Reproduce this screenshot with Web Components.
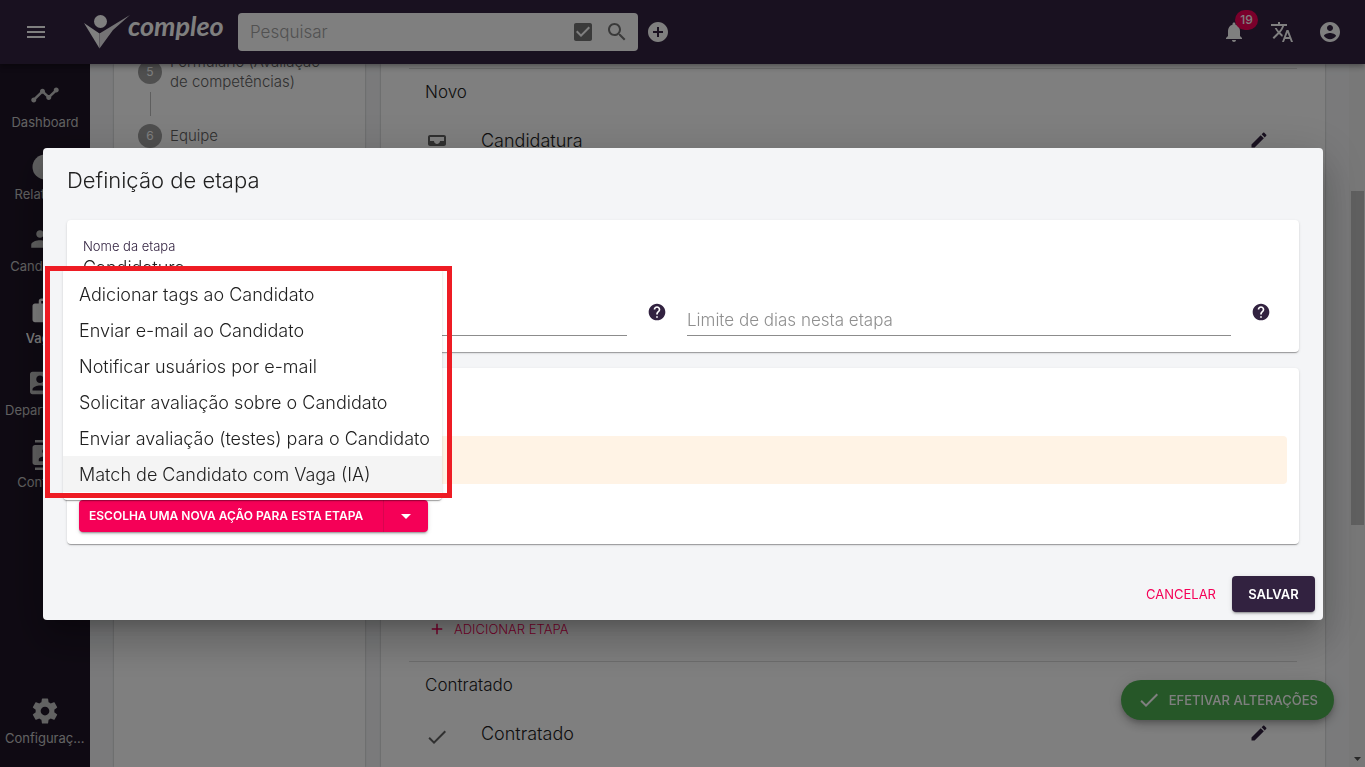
<!DOCTYPE html>
<html lang="pt-BR">
<head>
<meta charset="utf-8">
<title>Compleo - Definição de etapa</title>
<style>
html,body{margin:0;height:100%;overflow:hidden}
body{font-family:Inter,"Open Sans",sans-serif;font-weight:300;font-size:16px;color:#212121;
--brand:#322240;--accent:#f50057;--page:#f4f5f7}
</style>
</head>
<body>
<app-shell>
  <app-header slot="header"></app-header>
  <nav-bar slot="nav">
    <nav-item icon="timeline">Dashboard</nav-item>
    <nav-item icon="pie">Relatórios</nav-item>
    <nav-item icon="people">Candidatos</nav-item>
    <nav-item icon="bag" active>Vagas</nav-item>
    <nav-item icon="contact_mail">Departamentos</nav-item>
    <nav-item icon="contacts">Contatos</nav-item>
    <nav-item icon="settings" slot="end">Configurações</nav-item>
  </nav-bar>
  <step-list></step-list>
  <stage-board>
    <stage-group name="Novo" addable grow>
      <stage-row icon="inbox">Candidatura</stage-row>
    </stage-group>
    <stage-group name="Contratado">
      <stage-row icon="check">Contratado</stage-row>
    </stage-group>
  </stage-board>
  <apply-button slot="float">EFETIVAR ALTERAÇÕES</apply-button>
</app-shell>
<stage-dialog heading="Definição de etapa">
  <paper-card>
    <stage-form></stage-form>
  </paper-card>
  <paper-card>
    <stage-actions>
      <action-menu>
        <menu-option>Adicionar tags ao Candidato</menu-option>
        <menu-option>Enviar e-mail ao Candidato</menu-option>
        <menu-option>Notificar usuários por e-mail</menu-option>
        <menu-option>Solicitar avaliação sobre o Candidato</menu-option>
        <menu-option>Enviar avaliação (testes) para o Candidato</menu-option>
        <menu-option active>Match de Candidato com Vaga (IA)</menu-option>
      </action-menu>
    </stage-actions>
  </paper-card>
</stage-dialog>

<script>
const ICONS = {
  menu:'M3 18h18v-2H3v2zm0-5h18v-2H3v2zm0-7v2h18V6H3z',
  checkbox:'M19 3H5c-1.110 0-2 .9-2 2v14c0 1.100.89 2 2 2h14c1.110 0 2-.9 2-2V5c0-1.100-.89-2-2-2zm-9 14l-5-5 1.410-1.410L10 14.170l7.590-7.590L19 8l-9 9z',
  search:'M15.500 14h-.79l-.28-.27C15.410 12.590 16 11.110 16 9.500 16 5.910 13.090 3 9.500 3S3 5.910 3 9.500 5.910 16 9.500 16c1.610 0 3.090-.59 4.230-1.570l.27.28v.79l5 4.990L20.490 19l-4.990-5zm-6 0C7.010 14 5 11.990 5 9.500S7.010 5 9.500 5 14 7.010 14 9.500 11.990 14 9.500 14z',
  add_circle:'M12 2C6.480 2 2 6.480 2 12s4.480 10 10 10 10-4.480 10-10S17.520 2 12 2zm5 11h-4v4h-2v-4H7v-2h4V7h2v4h4v2z',
  bell:'M12 22c1.100 0 2-.9 2-2h-4c0 1.100.89 2 2 2zm6-6v-5c0-3.070-1.640-5.640-4.500-6.320V4c0-.83-.67-1.500-1.500-1.500s-1.500.67-1.500 1.500v.68C7.630 5.360 6 7.920 6 11v5l-2 2v1h16v-1l-2-2z',
  translate:'M12.870 15.070l-2.540-2.510.03-.03c1.740-1.940 2.980-4.170 3.710-6.530H17V4h-7V2H8v2H1v1.990h11.170C11.500 7.920 10.440 9.750 9 11.350 8.070 10.320 7.300 9.190 6.690 8h-2c.73 1.630 1.730 3.170 2.980 4.560l-5.090 5.020L4 19l5-5 3.110 3.110.76-2.040zM18.500 10h-2L12 22h2l1.120-3h4.750L21 22h2l-4.500-12zm-2.620 7l1.620-4.330L19.120 17h-3.240z',
  account:'M12 2C6.480 2 2 6.480 2 12s4.480 10 10 10 10-4.480 10-10S17.520 2 12 2zm0 3c1.660 0 3 1.340 3 3s-1.340 3-3 3-3-1.340-3-3 1.340-3 3-3zm0 14.200c-2.500 0-4.710-1.280-6-3.220.03-1.990 4-3.080 6-3.080 1.990 0 5.970 1.090 6 3.080-1.290 1.940-3.500 3.220-6 3.220z',
  timeline:'M23 8c0 1.100-.9 2-2 2-.18 0-.35-.02-.51-.07l-3.560 3.550c.05.16.07.34.07.52 0 1.100-.9 2-2 2s-2-.9-2-2c0-.18.02-.36.07-.52l-2.550-2.550c-.16.05-.34.07-.52.07s-.36-.02-.52-.07l-4.550 4.560c.05.16.07.33.07.51 0 1.100-.9 2-2 2s-2-.9-2-2 .9-2 2-2c.18 0 .35.02.51.07l4.560-4.550C8.020 9.360 8 9.180 8 9c0-1.100.9-2 2-2s2 .9 2 2c0 .18-.02.36-.07.52l2.550 2.550c.16-.05.34-.07.52-.07s.36.02.52.07l3.550-3.560C19.020 8.350 19 8.180 19 8c0-1.100.9-2 2-2s2 .9 2 2z',
  pie:'M12 2a10 10 0 1 0 0 20 10 10 0 0 0 0-20z',
  people:'M16 11c1.660 0 2.990-1.340 2.990-3S17.660 5 16 5c-1.660 0-3 1.340-3 3s1.340 3 3 3zm-8 0c1.660 0 2.990-1.340 2.990-3S9.660 5 8 5C6.340 5 5 6.340 5 8s1.340 3 3 3zm0 2c-2.330 0-7 1.170-7 3.500V19h14v-2.500c0-2.330-4.670-3.500-7-3.500zm8 0c-.29 0-.62.02-.97.05 1.160.84 1.970 1.970 1.970 3.450V19h6v-2.500c0-2.330-4.670-3.500-7-3.500z',
  bag:'M20 6h-3V4c0-1.110-.89-2-2-2H9c-1.110 0-2 .89-2 2v2H4c-1.110 0-2 .89-2 2v11c0 1.110.89 2 2 2h16c1.110 0 2-.89 2-2V8c0-1.110-.89-2-2-2zm-5 0H9V4h6v2z',
  contact_mail:'M21 8V7l-3 2-3-2v1l3 2 3-2zm1-5H2C.9 3 0 3.900 0 5v14c0 1.100.9 2 2 2h20c1.100 0 1.990-.9 1.990-2L24 5c0-1.100-.9-2-2-2zM8 6c1.660 0 3 1.340 3 3s-1.340 3-3 3-3-1.340-3-3 1.340-3 3-3zm6 12H2v-1c0-2 4-3.100 6-3.100s6 1.100 6 3.100v1zm8-6h-8V6h8v6z',
  contacts:'M20 0H4v2h16V0zM4 24h16v-2H4v2zM20 4H4c-1.100 0-2 .9-2 2v12c0 1.100.9 2 2 2h16c1.100 0 2-.9 2-2V6c0-1.100-.9-2-2-2zm-8 2.750c1.240 0 2.250 1.010 2.250 2.250s-1.010 2.250-2.250 2.250S9.750 10.240 9.750 9 10.760 6.750 12 6.750zM17 17H7v-1.500c0-1.670 3.330-2.500 5-2.500s5 .83 5 2.500V17z',
  settings:'M19.430 12.980c.04-.32.07-.64.07-.98s-.03-.66-.07-.98l2.110-1.650c.19-.15.24-.42.12-.64l-2-3.460c-.12-.22-.39-.3-.61-.22l-2.490 1c-.52-.4-1.080-.73-1.690-.98l-.38-2.650C14.460 2.180 14.250 2 14 2h-4c-.25 0-.46.18-.49.42l-.38 2.650c-.61.25-1.170.59-1.690.98l-2.490-1c-.23-.09-.49 0-.61.22l-2 3.460c-.13.22-.07.49.12.64l2.110 1.650c-.04.32-.07.65-.07.98s.03.66.07.98l-2.110 1.650c-.19.15-.24.42-.12.64l2 3.460c.12.22.39.3.61.22l2.490-1c.52.4 1.080.73 1.690.98l.38 2.650c.03.24.24.42.49.42h4c.25 0 .46-.18.49-.42l.38-2.650c.61-.25 1.170-.59 1.690-.98l2.490 1c.23.09.49 0 .61-.22l2-3.460c.12-.22.07-.49-.12-.64l-2.110-1.650zM12 15.500c-1.930 0-3.500-1.570-3.500-3.500s1.570-3.500 3.500-3.500 3.500 1.570 3.500 3.500-1.570 3.500-3.500 3.500z',
  inbox:'M19 3H5c-1.100 0-2 .9-2 2v7c0 1.100.9 2 2 2h14c1.100 0 2-.9 2-2V5c0-1.100-.9-2-2-2zm0 6h-4c0 1.620-1.380 3-3 3s-3-1.380-3-3H5V5h14v4zm-4 7h6v3c0 1.100-.9 2-2 2H5c-1.100 0-2-.9-2-2v-3h6c0 1.660 1.340 3 3 3s3-1.340 3-3z',
  check:'M9 16.170L4.830 12l-1.420 1.410L9 19 21 7l-1.410-1.410z',
  edit:'M3 17.250V21h3.750L17.810 9.940l-3.750-3.750L3 17.250zM20.710 7.040c.39-.39.39-1.020 0-1.410l-2.340-2.340c-.39-.39-1.020-.39-1.410 0l-1.830 1.830 3.750 3.750 1.830-1.830z',
  plus:'M19 13h-6v6h-2v-6H5v-2h6V5h2v6h6v2z',
  help:'M12 2C6.480 2 2 6.480 2 12s4.480 10 10 10 10-4.480 10-10S17.520 2 12 2zm1 17h-2v-2h2v2zm2.070-7.750l-.9.92C13.450 12.900 13 13.500 13 15h-2v-.5c0-1.100.45-2.100 1.170-2.830l1.240-1.260c.37-.36.59-.86.59-1.410 0-1.100-.9-2-2-2s-2 .9-2 2H8c0-2.210 1.790-4 4-4s4 1.790 4 4c0 .88-.36 1.680-.93 2.250z',
  caret:'M7 10l5 5 5-5z'
};
const BASE = `:host,*{box-sizing:border-box}button{font:inherit;color:inherit;border:0;background:none;padding:0;margin:0;cursor:pointer}
input{font:inherit;border:0;outline:0;background:none;padding:0;margin:0;min-width:0}`;
function define(name, css, html){
  customElements.define(name, class extends HTMLElement{
    constructor(){
      super();
      const body = typeof html === 'function' ? html(this) : html;
      this.attachShadow({mode:'open'}).innerHTML = `<style>${BASE}${css}</style>${body}`;
    }
  });
}

define('ui-icon', `:host{display:block;flex:none;width:24px;height:24px}svg{display:block;width:100%;height:100%;fill:currentColor}`,
  el => `<svg viewBox="0 0 24 24" aria-hidden="true"><path d="${ICONS[el.getAttribute('name')]}"/></svg>`);

define('app-shell', `:host{display:grid;grid-template-rows:64px minmax(0,1fr);height:100vh;background:var(--page)}
.header{position:relative;z-index:1}
.body{display:flex;min-height:0;overflow:hidden}
main{flex:1;min-width:0;display:flex;gap:16px;padding:0 24px}
.float{position:fixed;right:31px;bottom:47px}`,
`<div class="header"><slot name="header"></slot></div>
<div class="body"><slot name="nav"></slot><main><slot></slot></main><scroll-rail></scroll-rail></div>
<div class="float"><slot name="float"></slot></div>`);

define('scroll-rail', `:host{flex:none;width:16px;background:#f1f1f1;display:grid;grid-template-rows:127fr 334fr 226fr 16px;padding:0 1px 0 2px}
i{grid-row:2;background:#c1c1c1}svg{grid-row:4;width:100%;height:16px}`,
`<i></i><svg viewBox="0 0 13 16" aria-hidden="true"><path d="M3 6h7l-3.500 4z" fill="#505050"/></svg>`);

define('brand-logo', `:host{display:block}
a{display:flex;align-items:center;color:#fff;text-decoration:none}
svg{display:block;width:46px;height:40px;flex:none}
b{font:italic 700 27px/32px Lato,sans-serif;margin:-12px 0 0 -2px}`,
`<a href="#" aria-label="compleo"><svg viewBox="0 0 46 40" fill="#fff"><circle cx="16.500" cy="9.500" r="6.500"/><path d="M0 11l15.500 10.500V36.500z"/><path d="M46 3L15.500 21.500V36.500L29 18z" fill="#e8e6ea"/></svg><b>compleo</b></a>`);

define('app-header', `:host{display:flex;align-items:center;height:64px;padding:0 23px 0 24px;background:var(--brand);color:#fff;
box-shadow:0 2px 4px -1px rgba(0,0,0,.2),0 4px 5px rgba(0,0,0,.14),0 1px 10px rgba(0,0,0,.12)}
brand-logo{width:154px;padding-left:0;flex:none;margin-left:36px}
form{flex:0 1 400px;display:flex;align-items:center;gap:10px;height:38px;padding:0 9px 0 12px;background:#fff;border-radius:4px;color:#757575}
input{flex:1;font-size:17px}input::placeholder{color:#a3a3a3;opacity:1}
.add{margin-left:8px}
.tools{margin-left:auto;display:flex;gap:24px}
.tools button{position:relative}
.badge{position:absolute;left:13px;top:-10px;min-width:23px;height:20px;border-radius:10px;background:var(--accent);color:#fff;font-weight:500;font-size:12px;line-height:20px;text-align:center}`,
`<button aria-label="Menu"><ui-icon name="menu"></ui-icon></button>
<brand-logo></brand-logo>
<form role="search"><input type="search" aria-label="Pesquisar" placeholder="Pesquisar">
<button type="button" aria-label="Opções"><ui-icon name="checkbox"></ui-icon></button><button type="button" aria-label="Buscar"><ui-icon name="search"></ui-icon></button></form>
<button class="add" aria-label="Adicionar"><ui-icon name="add_circle"></ui-icon></button>
<div class="tools"><button aria-label="Notificações"><ui-icon name="bell"></ui-icon><span class="badge">19</span></button>
<button aria-label="Idioma"><ui-icon name="translate"></ui-icon></button>
<button aria-label="Conta"><ui-icon name="account"></ui-icon></button></div>`);

define('nav-bar', `:host{flex:none;width:90px;background:#1f1527;display:block}
nav{height:100%;display:flex;flex-direction:column;padding:8px 0 7px}.end{margin-top:auto}`,
`<nav><slot></slot><div class="end"><slot name="end"></slot></div></nav>`);

define('nav-item', `:host{display:block;flex:none;height:72px;color:#c4c4c4;font-weight:400;font-size:13px}
:host([active]){color:#fff;font-weight:500}
a{display:flex;flex-direction:column;align-items:center;padding:8px 4px 0;color:inherit;text-decoration:none}
ui-icon{width:30px;height:30px}
span{max-width:80px;line-height:24px;overflow:hidden;text-overflow:ellipsis;white-space:nowrap}`,
el => `<a href="#"><ui-icon name="${el.getAttribute('icon')}"></ui-icon><span><slot></slot></span></a>`);

define('step-list', `:host{display:block;flex:none;width:251px;background:#fff;box-shadow:0 0 2px rgba(0,0,0,.3);padding:0 24px}
ol{list-style:none;margin:-12px 0 0;padding:0}
li{display:flex;align-items:center;gap:8px;font-size:15px;line-height:20px;color:#616161;font-weight:300}
li+li{margin-top:32px;position:relative}
li+li::before{content:"";position:absolute;left:12px;top:-32px;height:24px;border-left:1px solid #bdbdbd}
i{flex:none;width:24px;height:24px;border-radius:50%;background:#9e9e9e;color:#fff;font-style:normal;font-size:12px;font-weight:400;line-height:24px;text-align:center}`,
`<ol><li><i>5</i><span>Formulário (Avaliação de competências)</span></li><li><i>6</i><span>Equipe</span></li></ol>`);

define('stage-board', `:host{flex:1;min-width:0;display:block;background:#fff;box-shadow:0 0 2px rgba(0,0,0,.3);padding:4px 28px 0}`, `<slot></slot>`);

define('stage-group', `:host{display:flex;flex-direction:column;border-top:1px solid #dcdcdc;padding:11px 28px 16px 16px}
:host([grow]){min-height:593px}
h2{margin:0 0 12px;font-size:17px;line-height:24px;font-weight:300}
button{display:flex;align-items:center;gap:8px;height:32px;margin-top:auto;padding-left:3px;color:var(--accent);font-size:13px;align-self:start;font-weight:300}
button ui-icon{width:18px;height:18px}`,
el => `<h2>${el.getAttribute('name')}</h2><slot></slot>${el.hasAttribute('addable') ? '<button><ui-icon name="plus"></ui-icon>ADICIONAR ETAPA</button>' : ''}`);

define('stage-row', `:host{display:flex;align-items:center;gap:32px;height:48px;font-size:18px;font-weight:300}
.icon{color:#616161;margin-top:8px}span{flex:1}button{color:var(--brand)}button ui-icon{width:20px;height:20px}`,
el => `<ui-icon class="icon" name="${el.getAttribute('icon')}"></ui-icon><span><slot></slot></span><button aria-label="Editar"><ui-icon name="edit"></ui-icon></button>`);

define('apply-button', `:host{display:block}
button{display:flex;align-items:center;gap:8px;height:40px;padding:0 16px;border-radius:20px;background:#4caf50;color:#fff;font-size:13px;font-weight:500;
box-shadow:0 3px 5px -1px rgba(0,0,0,.2),0 6px 10px rgba(0,0,0,.14),0 1px 18px rgba(0,0,0,.12)}`,
`<button><ui-icon name="check"></ui-icon><span><slot></slot></span></button>`);

define('stage-dialog', `:host{position:fixed;inset:0;z-index:5;display:flex;align-items:center;justify-content:center;padding:1px 0 0 1px;background:rgba(0,0,0,.5)}
section{width:calc(100% - 84px);max-width:1280px;background:var(--page);border-radius:4px;
box-shadow:0 11px 15px -7px rgba(0,0,0,.2),0 24px 38px 3px rgba(0,0,0,.14),0 9px 46px 8px rgba(0,0,0,.12)}
h1{margin:0;padding:16px 24px;font-size:22px;line-height:32px;font-weight:300}
.content{display:grid;gap:16px;padding:8px 24px 24px}
footer{display:flex;justify-content:flex-end;gap:8px;padding:8px}
footer button{height:36px;border-radius:4px;font-size:13px;font-weight:400}
.cancel{color:var(--accent);padding:0 8px}
footer .save{background:var(--brand);color:#fff;font-weight:600;padding:0 16px;min-width:83px;box-shadow:0 3px 1px -2px rgba(0,0,0,.2),0 2px 2px rgba(0,0,0,.14),0 1px 5px rgba(0,0,0,.12)}`,
el => `<section role="dialog" aria-modal="true" aria-labelledby="t"><h1 id="t">${el.getAttribute('heading')}</h1>
<div class="content"><slot></slot></div>
<footer><button class="cancel">CANCELAR</button><button class="save">SALVAR</button></footer></section>`);

define('paper-card', `:host{display:block;background:#fff;border-radius:4px;box-shadow:0 2px 1px -1px rgba(0,0,0,.2),0 1px 1px rgba(0,0,0,.14),0 1px 3px rgba(0,0,0,.12)}`, `<slot></slot>`);

define('stage-form', `:host{display:block;padding:16px 8px 16px 16px}
.name label{display:block;font-size:13px;line-height:20px;color:var(--brand);font-weight:300}
.name input{display:block;width:100%;height:24px;font-size:18px;line-height:24px;color:#212121}
.row{display:grid;grid-template-columns:1fr 1fr;margin-top:24px}
.field{display:flex}
.field input{flex:1;height:32px;border-bottom:1px solid #8c8c8c;font-size:17px}
.field input::placeholder{color:#8f8f8f;opacity:1}
.field button{width:60px;height:16px;display:grid;grid-template-rows:16px;place-items:center;color:var(--brand)}
.field ui-icon{width:20px;height:20px}`,
`<div class="name"><label for="n">Nome da etapa</label><input id="n" value="Candidatura"></div>
<div class="row"><div class="field"><input type="text" aria-label="Tipo"><button aria-label="Ajuda"><ui-icon name="help"></ui-icon></button></div>
<div class="field"><input type="text" aria-label="Limite de dias nesta etapa" placeholder="Limite de dias nesta etapa"><button aria-label="Ajuda"><ui-icon name="help"></ui-icon></button></div></div>`);

define('stage-actions', `:host{display:block;padding:68px 12px 12px}
.notice{height:48px;border-radius:4px;background:#fff3e5;margin-bottom:16px}
.split{position:relative;width:349px}
.group{display:flex;height:32px;border-radius:4px;overflow:hidden;background:var(--accent);color:#fff;font-size:12px;font-weight:600;
box-shadow:0 3px 1px -2px rgba(0,0,0,.2),0 2px 2px rgba(0,0,0,.14),0 1px 5px rgba(0,0,0,.12)}
.main{flex:1;text-align:left;padding-left:10px;padding-bottom:2px;white-space:nowrap}
.more{width:45px;display:grid;place-items:center;border-left:1px solid #d8054f}
.pop{position:absolute;left:-16px;bottom:32px}`,
`<div class="notice"></div><div class="split"><div class="group"><button class="main">ESCOLHA UMA NOVA AÇÃO PARA ESTA ETAPA</button><button class="more" aria-label="Abrir opções"><ui-icon name="caret"></ui-icon></button></div>
<div class="pop"><slot></slot></div></div>`);

define('action-menu', `:host{display:block;position:relative;width:379px}
.list{background:#fff;border-radius:4px;padding:8px 0;box-shadow:0 2px 1px -1px rgba(0,0,0,.2),0 1px 1px rgba(0,0,0,.14),0 1px 3px rgba(0,0,0,.12)}
.mark{position:absolute;inset:-2px -10px 2px -18px;border:5px solid #ee1c24;pointer-events:none}`,
`<div class="list" role="menu"><slot></slot></div><div class="mark"></div>`);

define('menu-option', `:host{display:block}
button{display:block;width:100%;height:36px;padding:0 0 0 16px;text-align:left;white-space:nowrap;font-size:18px}
:host([active]) button{background:#f4f4f4}`, `<button role="menuitem"><slot></slot></button>`);
</script>
</body>
</html>
